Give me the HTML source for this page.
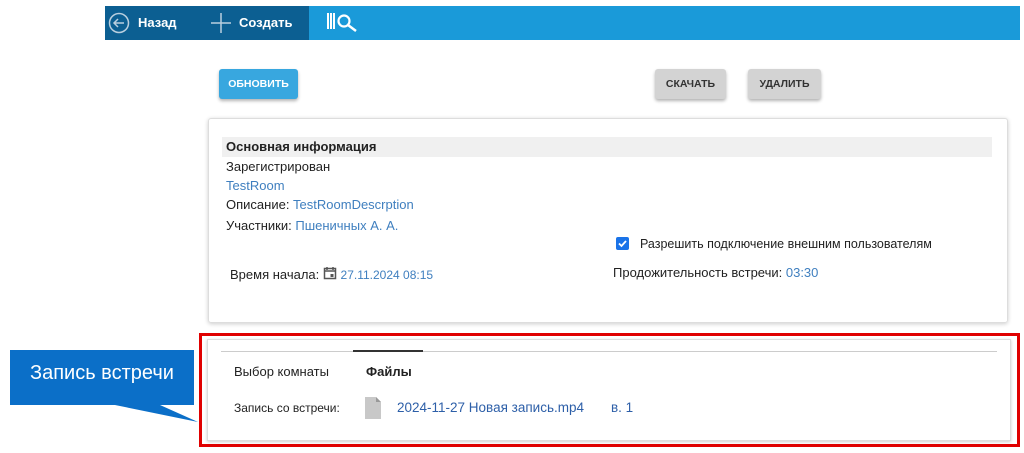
<!DOCTYPE html>
<html><head><meta charset="utf-8"><style>
body{margin:0;width:1024px;height:453px;background:#fff;font-family:"Liberation Sans",sans-serif;position:relative;overflow:hidden;font-size:13px;color:#222}
.a{position:absolute}
.btn{position:absolute;height:30px;border-radius:3px;font-size:10.5px;font-weight:bold;display:flex;align-items:center;justify-content:center;box-shadow:0 2px 3px rgba(0,0,0,.3)}
.lnk{color:#3f7fbf}
</style></head><body>
<div class="a" style="left:105px;top:6px;width:915px;height:34px;background:#1a9ad9"></div>
<div class="a" style="left:105px;top:6px;width:204px;height:34px;background:#0c5f92"></div>
<svg class="a" style="left:108px;top:12px" width="22" height="22" viewBox="0 0 22 22"><circle cx="11" cy="11" r="9.5" fill="none" stroke="#b9cfdf" stroke-width="1.5"/><path d="M16 11H6M10 7l-4 4 4 4" fill="none" stroke="#b9cfdf" stroke-width="1.5"/></svg>
<div class="a" style="left:138px;top:15px;color:#fff;font-size:13px;font-weight:bold">Назад</div>
<svg class="a" style="left:211px;top:13px" width="20" height="20"><path d="M10 0V20M0 10H20" stroke="#b9cfdf" stroke-width="1.5"/></svg>
<div class="a" style="left:239px;top:15px;color:#fff;font-size:13px;font-weight:bold">Создать</div>
<svg class="a" style="left:326px;top:11px" width="38" height="22"><path d="M2 2V18M5 2V18M8 2V18" stroke="#fff" stroke-width="2"/><circle cx="18" cy="10" r="5.5" fill="none" stroke="#fff" stroke-width="2.2"/><path d="M22 14l8 6" stroke="#fff" stroke-width="2.5"/></svg>
<div class="btn" style="left:219px;top:69px;width:79px;background:#38a7df;color:#fff">ОБНОВИТЬ</div>
<div class="btn" style="left:655px;top:69px;width:71px;background:#d3d3d3;color:#333">СКАЧАТЬ</div>
<div class="btn" style="left:748px;top:69px;width:73px;background:#d3d3d3;color:#333">УДАЛИТЬ</div>
<div class="a" style="left:208px;top:118px;width:798px;height:203px;border:1px solid #ddd;border-radius:3px;box-shadow:0 1px 4px rgba(0,0,0,.2)"></div>
<div class="a" style="left:222px;top:137px;width:770px;height:20px;background:#f0f0f0"></div>
<div class="a" style="left:226px;top:139px;font-weight:bold">Основная информация</div>
<div class="a" style="left:226px;top:159px">Зарегистрирован</div>
<div class="a lnk" style="left:226px;top:178px">TestRoom</div>
<div class="a" style="left:226px;top:197px">Описание: <span class="lnk">TestRoomDescrption</span></div>
<div class="a" style="left:226px;top:218px">Участники: <span class="lnk">Пшеничных А. А.</span></div>
<div class="a" style="left:230px;top:266px">Время начала: <svg width="14" height="14" viewBox="0 0 14 14" style="vertical-align:-1px"><rect x="1.5" y="2.5" width="11" height="10" fill="none" stroke="#555" stroke-width="1.5"/><path d="M1.5 5h11M4 1v3M10 1v3" stroke="#555" stroke-width="1.5"/><rect x="7.5" y="8" width="3" height="3" fill="#555"/></svg> <span class="lnk" style="font-size:12px">27.11.2024 08:15</span></div>
<div class="a" style="left:616px;top:237px;width:13px;height:13px;background:#1a73e8;border-radius:2px"><svg width="13" height="13"><path d="M3 6.5l2.5 2.5 4.5-5" fill="none" stroke="#fff" stroke-width="1.8"/></svg></div>
<div class="a" style="left:640px;top:237px;font-size:12.5px">Разрешить подключение внешним пользователям</div>
<div class="a" style="left:613px;top:265px">Продожительность встречи: <span class="lnk">03:30</span></div>
<div class="a" style="left:199px;top:333px;width:815px;height:108px;border:3px solid #e00000"></div>
<div class="a" style="left:207px;top:339px;width:802px;height:100px;border:1px solid #ddd;box-shadow:0 1px 3px rgba(0,0,0,.2)"></div>
<div class="a" style="left:221px;top:351px;width:776px;height:1px;background:#ccc"></div>
<div class="a" style="left:353px;top:350px;width:70px;height:2px;background:#333"></div>
<div class="a" style="left:234px;top:364px">Выбор комнаты</div>
<div class="a" style="left:366px;top:364px;font-weight:bold">Файлы</div>
<div class="a" style="left:234px;top:401px;font-size:12px">Запись со встречи:</div>
<svg class="a" style="left:364px;top:396px" width="18" height="24"><path d="M1 1h11l5 5v17H1z" fill="#c8c8c8"/><path d="M12 1v5h5z" fill="#999"/></svg>
<div class="a" style="left:397px;top:400px;color:#2d5fa8;font-size:13.5px">2024-11-27 Новая запись.mp4</div>
<div class="a" style="left:611px;top:400px;color:#2d5fa8;font-size:13.5px">в. 1</div>
<svg class="a" style="left:0;top:340px" width="200" height="85"><rect x="10" y="10" width="184" height="55" fill="#0b6fc8"/><path d="M115 65L198 82L160 65z" fill="#0b6fc8"/></svg>
<div class="a" style="left:30px;top:362px;color:#fff;font-size:20px">Запись встречи</div>
</body></html>
